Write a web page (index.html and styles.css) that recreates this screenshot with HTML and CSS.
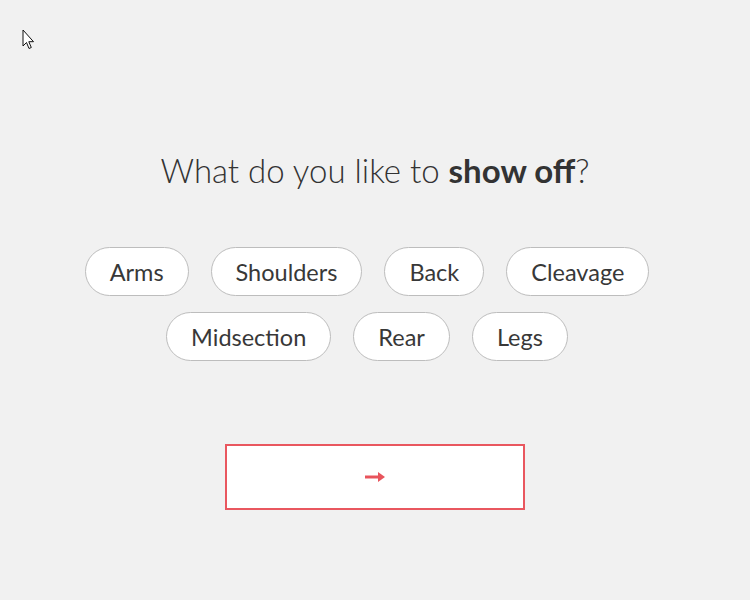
FILE: index.html
```html
<!DOCTYPE html>
<html>
<head>
<meta charset="utf-8">
<link rel="stylesheet" href="styles.css">
</head>
<body>
<svg class="cursor" width="14" height="22" viewBox="0 0 14 22"><path d="M1 1 L1 17 L4.5 13.5 L7 19.5 L9.3 18.5 L6.8 12.7 L11.5 12.7 Z" fill="#fff" stroke="#111" stroke-width="1" stroke-linejoin="round"/></svg>
<main class="quiz">
  <h1 class="question">What do you like to <strong>show off</strong>?</h1>
  <div class="pills">
    <button class="pill">Arms</button>
    <button class="pill">Shoulders</button>
    <button class="pill">Back</button>
    <button class="pill">Cleavage</button>
    <button class="pill">Midsection</button>
    <button class="pill">Rear</button>
    <button class="pill">Legs</button>
  </div>
  <button class="next" aria-label="Next">
    <svg width="22" height="12" viewBox="0 0 22 12"><path d="M1 6 H15" stroke="#e8545c" stroke-width="3"/><path d="M14 1 L21 6 L14 11 Z" fill="#e8545c"/></svg>
  </button>
</main>
</body>
</html>
```
FILE: styles.css
```css
html, body {
  margin: 0;
  padding: 0;
  background: #f1f1f1;
  height: 100%;
}
body {
  font-family: "Lato", "Open Sans", sans-serif;
  color: #333;
}
.cursor {
  position: absolute;
  left: 22px;
  top: 29px;
}
.quiz {
  display: flex;
  flex-direction: column;
  align-items: center;
  padding-top: 148px;
}
.question {
  margin: 0;
  font-size: 33px;
  font-weight: 300;
  line-height: 44px;
  color: #333;
}
.question strong {
  font-weight: 700;
}
.pills {
  margin-top: 55px;
  width: 660px;
  box-sizing: border-box;
  padding-right: 16px;
  display: flex;
  flex-wrap: wrap;
  justify-content: center;
  gap: 16px 22px;
}
.pill {
  height: 49px;
  padding: 0 24px;
  border: 1px solid #bdbdbd;
  border-radius: 25px;
  background: #fff;
  font-family: inherit;
  font-size: 23.5px;
  font-weight: 400;
  color: #383838;
}
.next {
  margin-top: 83px;
  width: 300px;
  height: 66px;
  border: 2px solid #e9575f;
  background: #fff;
  display: flex;
  align-items: center;
  justify-content: center;
  padding: 0;
}
```
